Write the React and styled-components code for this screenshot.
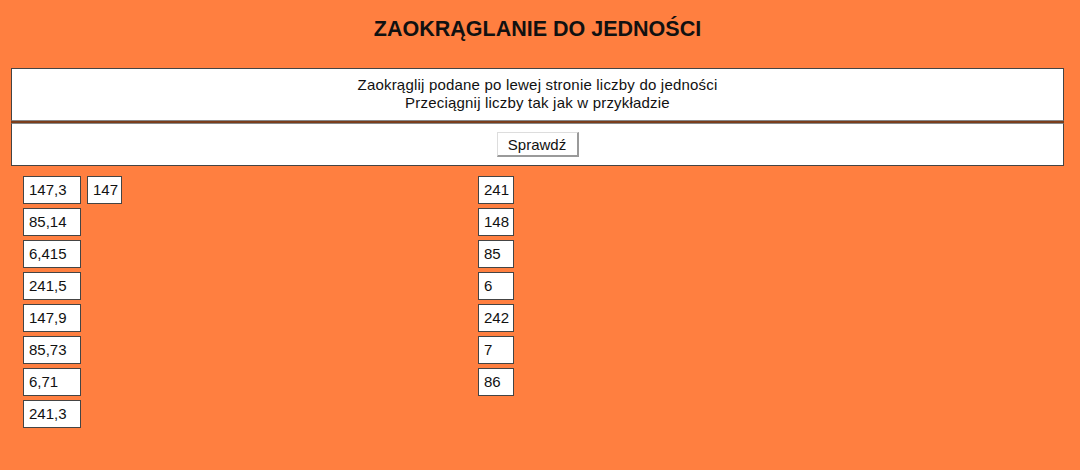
import styled, { createGlobalStyle } from "styled-components";

const GlobalStyle = createGlobalStyle`
  body {
    margin: 0;
    background: #ff7f40;
    font-family: "Liberation Sans", Arial, sans-serif;
    color: #111;
  }
`;

const left = [
  ["147,3", "147"],
  ["85,14"],
  ["6,415"],
  ["241,5"],
  ["147,9"],
  ["85,73"],
  ["6,71"],
  ["241,3"],
];
const right = ["241", "148", "85", "6", "242", "7", "86"];

export default function App() {
  return (
    <Page>
      <GlobalStyle />
      <Title>ZAOKRĄGLANIE DO JEDNOŚCI</Title>
      <Panel>
        <Instructions>
          Zaokrąglij podane po lewej stronie liczby do jedności
          <br />
          Przeciągnij liczby tak jak w przykładzie
        </Instructions>
        <Actions>
          <CheckButton>Sprawdź</CheckButton>
        </Actions>
      </Panel>
      <Board>
        <Column>
          {left.map((row, i) => (
            <Row key={i}>
              {row.map((n, j) => (
                <NumberBox key={n} width={j === 0 ? 58 : 35}>
                  {n}
                </NumberBox>
              ))}
            </Row>
          ))}
        </Column>
        <Column>
          {right.map((n) => (
            <Row key={n}>
              <NumberBox width={36}>{n}</NumberBox>
            </Row>
          ))}
        </Column>
      </Board>
    </Page>
  );
}

const Page = styled.div`
  padding: 16px 16px 0 11px;
  height: 470px;
  box-sizing: border-box;
`;
const Title = styled.h1`
  margin: 0 0 26px;
  font-size: 21.5px;
  line-height: 26px;
  font-weight: bold;
  text-align: center;
  color: #111;
`;
const Panel = styled.div`
  display: flex;
  flex-direction: column;
  background: #7a3e1c;
  gap: 2px;
`;
const Instructions = styled.div`
  background: #fff;
  border: 1px solid #444;
  border-bottom-color: #888;
  padding: 7px 0 8px;
  font-size: 15px;
  letter-spacing: 0.2px;
  line-height: 18px;
  text-align: center;
`;
const Actions = styled.div`
  background: #fff;
  border: 1px solid #444;
  border-top-color: #888;
  padding: 8px 0 8px;
  display: flex;
  justify-content: center;
`;
const CheckButton = styled.button`
  font-family: "Liberation Sans", Arial, sans-serif;
  font-size: 15px;
  color: #111;
  background: #fff;
  height: 25px;
  width: 82px;
  padding: 0;
  border: 1px solid #ddd;
  border-right: 2px solid #9a9a9a;
  border-bottom: 2px solid #9a9a9a;
`;
const Board = styled.div`
  display: grid;
  grid-template-columns: 455px 1fr;
  padding: 10px 0 0 12px;
`;
const Column = styled.div`
  display: flex;
  flex-direction: column;
  gap: 4px;
`;
const Row = styled.div`
  display: flex;
  gap: 6px;
`;
const NumberBox = styled.div`
  width: ${(p) => p.width}px;
  height: 28px;
  box-sizing: border-box;
  background: #fff;
  border: 1px solid #444;
  padding-left: 5px;
  font-size: 15px;
  line-height: 26px;
  color: #111;
`;
